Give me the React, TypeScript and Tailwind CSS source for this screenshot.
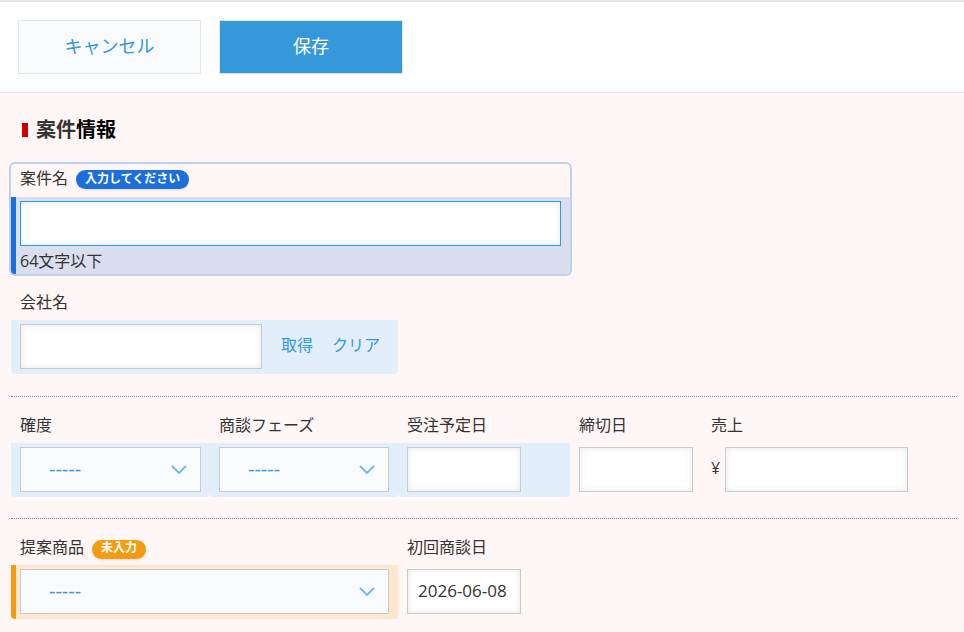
import React, { useState } from "react";
import clsx from "clsx";

type Tone = "none" | "info" | "active" | "warning";

const bodyTone: Record<Tone, string> = {
    none: "",
    info: "bg-[#e2effb] rounded-b",
    active: "bg-[#dadfef] border-l-[5px] border-[#1c6edb] rounded-b",
    warning: "bg-[#fee6cf] border-l-[5px] border-[#f39c12] rounded-b",
};

const inputClass = "block h-[45px] border bg-white px-[10px] pb-[2px] text-[17px] text-[#333] shadow-[inset_0_0_6px_rgba(0,0,0,0.1)] focus:outline-none";

function Badge({ className, children }: { className: string; children: React.ReactNode }) {
    return (
        <span className={clsx("ml-2 mt-[2px] flex h-[19px] items-center rounded-full px-[9px] pb-[2px] text-xs font-bold text-white shadow-sm", className)}>
            {children}
        </span>
    );
}

type FieldProps = {
    id: string;
    label: string;
    tone?: Tone;
    badge?: React.ReactNode;
    className?: string;
    children: React.ReactNode;
};

function Field({ id, label, tone = "none", badge, className, children }: FieldProps) {
    const hasBar = tone === "active" || tone === "warning";
    return (
        <div className={className}>
            <div className={clsx("flex items-center pl-[9px]", tone === "active" ? "h-[33px] pb-1" : "h-9 pt-[2px]")}>
                <label htmlFor={id} className="whitespace-nowrap pb-[2px]">{label}</label>
                {badge}
            </div>
            <div className={clsx("pr-[9px] pt-1", hasBar ? "pl-1" : "pl-[9px]", tone === "active" ? "pb-0" : "pb-[5px]", bodyTone[tone])}>
                {children}
            </div>
        </div>
    );
}

function SelectBox({ id }: { id: string }) {
    return (
        <div className="relative">
            <select
                id={id}
                className="block h-[45px] w-full appearance-none border border-[#c8cacb] bg-[#f8fafc] pb-[2px] pl-7 pr-10 text-xl text-[#3498db] focus:outline-none"
            >
                <option>-----</option>
            </select>
            <svg className="pointer-events-none absolute right-[14px] top-[18px]" width="16" height="10" viewBox="0 0 16 10" fill="none" stroke="#6fb8e6" strokeWidth="1.8">
                <path d="M1 1l7 7 7-7" />
            </svg>
        </div>
    );
}

export default function App() {
    const [name, setName] = useState("");
    const [firstDate, setFirstDate] = useState("2026-06-08");

    return (
        <div className="min-h-screen bg-[#fff7f5] font-['Open_Sans','Noto_Sans_CJK_JP',sans-serif] text-base leading-6 text-[#333]">
            <header className="flex gap-[18px] border-b border-t-2 border-[#e4e7e8] bg-white px-[18px] py-[18px]">
                <button type="button" className="h-[54px] w-[183px] border border-[#e1e6e8] bg-[#f8fafc] pb-[2px] text-lg text-[#3498db]">キャンセル</button>
                <button type="button" className="h-[54px] w-[184px] border border-[#e1e6e8] bg-[#3498db] pb-[2px] text-lg text-white">保存</button>
            </header>

            <form className="pb-[13px] pl-[11px] pr-[7px] pt-[17px]">
                <h2 className="mb-[14px] flex h-10 items-center pl-[11px] text-xl font-bold">
                    <span className="mr-2 h-[14px] w-[6px] bg-[#cc0000]" />
                    <span>案件</span>
                    <span className="text-black">情報</span>
                </h2>

                <Field
                    id="name"
                    label="案件名"
                    tone="active"
                    badge={<Badge className="bg-[#1c6edb]">入力してください</Badge>}
                    className="max-w-[559px] rounded shadow-[0_0_0_2px_#bed0ef]"
                >
                    <input
                        id="name"
                        type="text"
                        maxLength={64}
                        value={name}
                        onChange={(e) => setName(e.target.value)}
                        className={clsx(inputClass, "w-full border-[#2a9be0]")}
                    />
                    <p className="flex h-7 items-center pt-[1px]">64文字以下</p>
                </Field>

                <div className="mt-[10px] flex">
                    <Field id="company" label="会社名" tone="info">
                        <div className="flex items-center">
                            <input id="company" type="text" className={clsx(inputClass, "w-[242px] border-[#c8cacb]")} />
                            <a href="#" className="ml-[19px] pb-1 text-[#3498db]">取得</a>
                            <a href="#" className="ml-[19px] mr-[9px] pb-1 text-[#3498db]">クリア</a>
                        </div>
                    </Field>
                </div>

                <div className="mt-[22px] flex border-t border-dotted border-[#888] pt-[10px]">
                    <Field id="accuracy" label="確度" tone="info" className="w-[199px]">
                        <SelectBox id="accuracy" />
                    </Field>
                    <Field id="phase" label="商談フェーズ" tone="info" className="w-[188px]">
                        <SelectBox id="phase" />
                    </Field>
                    <Field id="order-date" label="受注予定日" tone="info" className="w-[172px]">
                        <input id="order-date" type="text" className={clsx(inputClass, "w-[114px] border-[#c8cacb]")} />
                    </Field>
                    <Field id="deadline" label="締切日" className="w-[132px]">
                        <input id="deadline" type="text" className={clsx(inputClass, "w-[114px] border-[#c8cacb]")} />
                    </Field>
                    <Field id="sales" label="売上">
                        <div className="flex items-center">
                            <span className="w-[14px] pb-1">¥</span>
                            <input id="sales" type="text" className={clsx(inputClass, "w-[183px] border-[#c8cacb]")} />
                        </div>
                    </Field>
                </div>

                <div className="mt-[21px] flex border-t border-dotted border-[#888] pt-[10px]">
                    <Field
                        id="product"
                        label="提案商品"
                        tone="warning"
                        badge={<Badge className="bg-[#f39c12]">未入力</Badge>}
                        className="w-[387px]"
                    >
                        <SelectBox id="product" />
                    </Field>
                    <Field id="first-date" label="初回商談日">
                        <input
                            id="first-date"
                            type="text"
                            value={firstDate}
                            onChange={(e) => setFirstDate(e.target.value)}
                            className={clsx(inputClass, "w-[114px] border-[#c8cacb]")}
                        />
                    </Field>
                </div>
            </form>
        </div>
    );
}
